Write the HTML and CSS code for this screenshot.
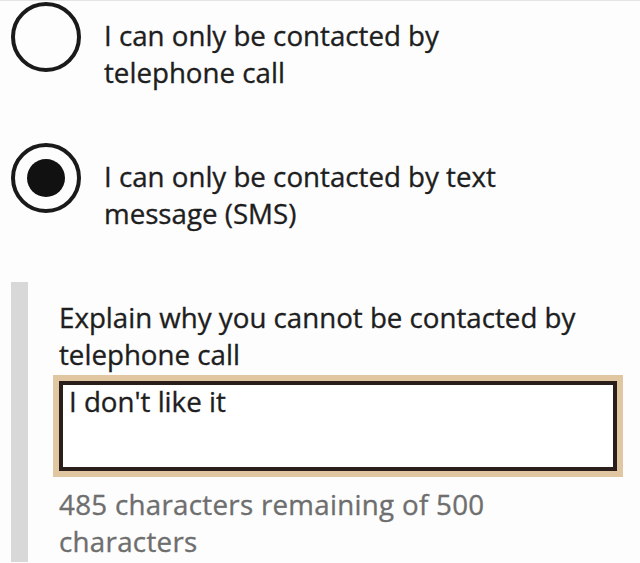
FILE: index.html
```html
<!DOCTYPE html>
<html lang="en">
<head>
<meta charset="utf-8">
<title>Contact preferences</title>
<link rel="stylesheet" href="styles.css">
</head>
<body>
<div class="radios">
  <div class="radio">
    <span class="radio__circle"></span>
    <label class="radio__label">I can only be contacted by telephone call</label>
  </div>
  <div class="radio radio--checked">
    <span class="radio__circle"></span>
    <label class="radio__label">I can only be contacted by text message (SMS)</label>
  </div>
</div>
<div class="conditional">
  <label class="field-label">Explain why you cannot be contacted by telephone call</label>
  <div class="textarea">I don't like it</div>
  <div class="hint">485 characters remaining of 500 characters</div>
</div>
</body>
</html>
```

FILE: styles.css
```css
html, body {
  height: 100%;
}
body {
  margin: 0;
  background: #fdfdfd;
  font-family: "Open Sans", sans-serif;
  font-size: 27.7px;
  line-height: 37px;
  color: #1e1e1e;
  -webkit-text-stroke: 0.35px currentColor;
  border-top: 1px solid #e4e4e4;
  overflow: hidden;
  box-sizing: border-box;
}
.radios {
  padding: 1px 0 0 11px;
  display: flex;
  flex-direction: column;
  gap: 52px;
}
.radio {
  display: flex;
  align-items: flex-start;
}
.radio__circle {
  flex: none;
  width: 70px;
  height: 70px;
  box-sizing: border-box;
  border: 4px solid #1a1a1a;
  border-radius: 50%;
  display: flex;
  align-items: center;
  justify-content: center;
}
.radio--checked .radio__circle::after {
  content: "";
  width: 38px;
  height: 38px;
  border-radius: 50%;
  background: #111;
}
.radio__label {
  padding: 15px 0 0 23px;
  max-width: 440px;
}
.conditional {
  margin: 50px 0 0 11px;
  border-left: 17px solid #d8d8d8;
  padding: 17px 0 2px 31px;
  width: 558px;
}
.field-label {
  display: block;
}
.textarea {
  margin-top: 8px;
  height: 90px;
  box-sizing: border-box;
  border: 4px solid #2a1f1b;
  outline: 6px solid #e0c7a1;
  background: #fff;
  padding: 1px 6px 0;
  line-height: 31px;
}
.hint {
  margin-top: 15px;
  color: #6e6e6e;
  letter-spacing: 0.3px;
}
```
